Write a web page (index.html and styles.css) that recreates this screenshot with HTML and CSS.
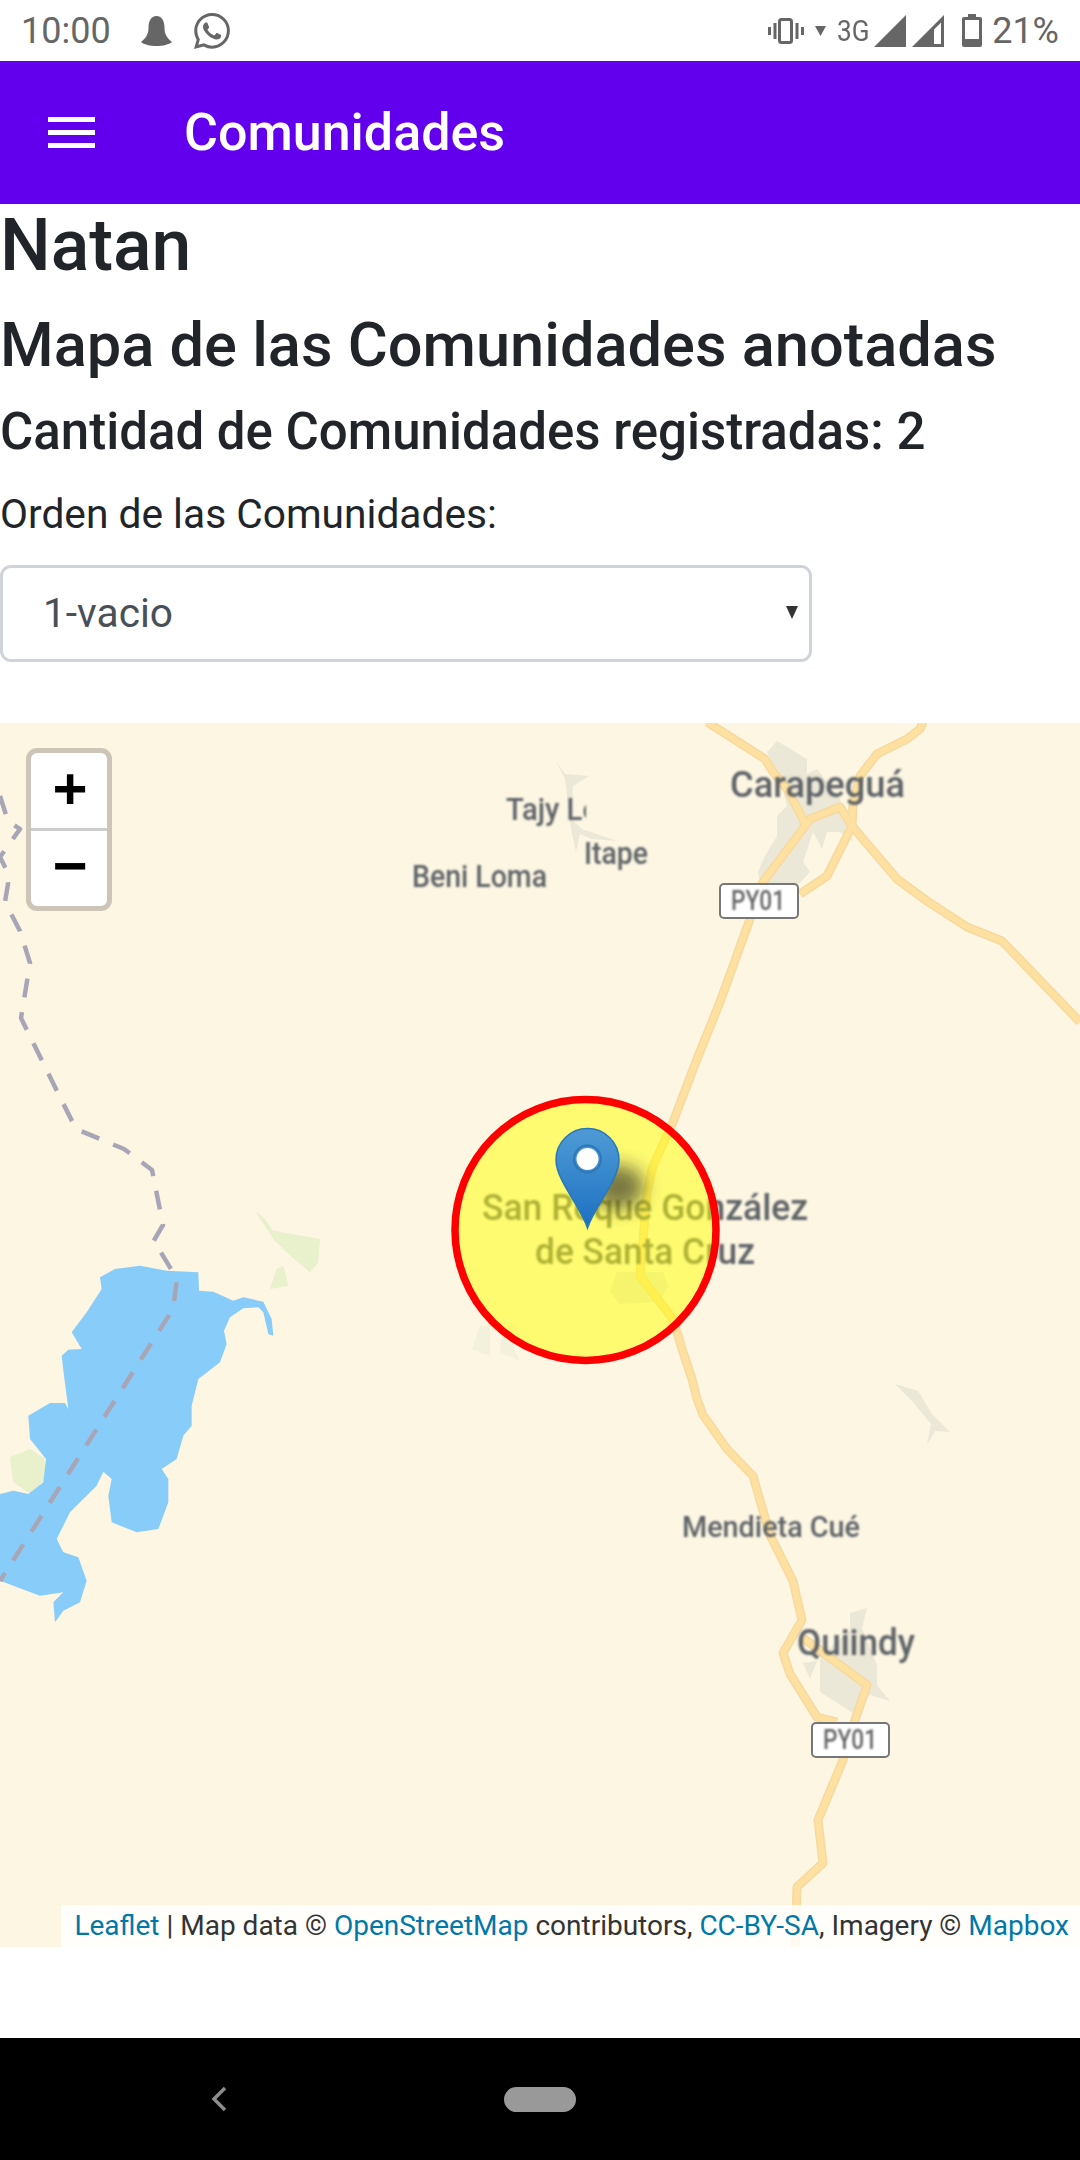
FILE: index.html
```html
<!DOCTYPE html>
<html lang="es">
<head>
  <meta charset="UTF-8">
  <title>Comunidades</title>
  <link rel="stylesheet" href="styles.css">
</head>
<body>

  <div class="statusbar">
    <span class="clock">10:00</span>
    <svg class="ic-bell" viewBox="0 0 31 30"><path d="M15.5 0C10 0 7.500 5 7.500 12c0 6-2.500 10-7.500 14 3 2.500 9 4 15.500 4s12.500-1.500 15.500-4c-5-4-7.500-8-7.500-14C23.500 5 21 0 15.500 0z"/></svg>
    <svg class="ic-whatsapp" viewBox="0 0 24 24"><path d="M17.472 14.382c-.297-.149-1.758-.867-2.03-.967-.273-.099-.471-.148-.67.15-.197.297-.767.966-.94 1.164-.173.199-.347.223-.644.075-.297-.15-1.255-.463-2.39-1.475-.883-.788-1.48-1.761-1.653-2.059-.173-.297-.018-.458.13-.606.134-.133.298-.347.446-.52.149-.174.198-.298.298-.497.099-.198.05-.371-.025-.52-.075-.149-.669-1.612-.916-2.207-.242-.579-.487-.5-.669-.51-.173-.008-.371-.01-.57-.01-.198 0-.52.074-.792.372-.272.297-1.04 1.016-1.04 2.479 0 1.462 1.065 2.875 1.213 3.074.149.198 2.096 3.2 5.077 4.487.709.306 1.262.489 1.694.625.712.227 1.36.195 1.871.118.571-.085 1.758-.719 2.006-1.413.248-.694.248-1.289.173-1.413-.074-.124-.272-.198-.57-.347m-5.421 7.403h-.004a9.87 9.87 0 01-5.031-1.378l-.361-.214-3.741.982.998-3.648-.235-.374a9.86 9.86 0 01-1.51-5.26c.001-5.45 4.436-9.884 9.888-9.884 2.64 0 5.122 1.03 6.988 2.898a9.825 9.825 0 012.893 6.994c-.003 5.45-4.437 9.884-9.885 9.884m8.413-18.297A11.815 11.815 0 0012.05 0C5.495 0 .16 5.335.157 11.892c0 2.096.547 4.142 1.588 5.945L.057 24l6.305-1.654a11.882 11.882 0 005.683 1.448h.005c6.554 0 11.89-5.335 11.893-11.893a11.821 11.821 0 00-3.48-8.413z"/></svg>
    <div class="status-right">
      <svg class="ic-vibrate" viewBox="0 0 36 26">
        <rect x="0" y="9" width="3" height="8"/>
        <rect x="5.500" y="5" width="3" height="16"/>
        <rect x="11.500" y="1.500" width="12" height="23" rx="2" class="hollow"/>
        <rect x="27.500" y="5" width="3" height="16"/>
        <rect x="33" y="9" width="3" height="8"/>
      </svg>
      <svg class="ic-arrow" viewBox="0 0 11 10"><path d="M0 0h11L5.500 10z"/></svg>
      <span class="net">3G</span>
      <svg class="ic-signal" viewBox="0 0 32 32"><path d="M0 32L32 0v32z"/></svg>
      <svg class="ic-signal" viewBox="0 0 32 32"><path d="M0 32L32 0v32zM22 14.500v14.500h7V7.500z" fill-rule="evenodd"/></svg>
      <svg class="ic-battery" viewBox="0 0 20 33"><path d="M6 0h8v3h4a2 2 0 012 2v26a2 2 0 01-2 2H2a2 2 0 01-2-2V5a2 2 0 012-2h4zM3 6v19h14V6z" fill-rule="evenodd"/></svg>
      <span class="pct">21%</span>
    </div>
  </div>

  <header class="appbar">
    <div class="burger"><i></i><i></i><i></i></div>
    <div class="appbar-title">Comunidades</div>
  </header>

  <main class="content">
    <h1>Natan</h1>
    <h2>Mapa de las Comunidades anotadas</h2>
    <h3>Cantidad de Comunidades registradas: 2</h3>
    <label for="orden">Orden de las Comunidades:</label>
    <div class="select-wrap">
      <select id="orden">
        <option>1-vacio</option>
        <option>2-vacio</option>
      </select>
    </div>

    <div class="map">
      <svg class="map-canvas" viewBox="0 724 1080 1224">
        <defs>
          <filter id="soft"><feGaussianBlur stdDeviation="0.9"/></filter>
          <filter id="blur-shadow" x="-50%" y="-50%" width="200%" height="200%"><feGaussianBlur stdDeviation="9"/></filter>
          <clipPath id="tile-left"><rect x="0" y="724" width="586" height="300"/></clipPath>
          <linearGradient id="pin" x1="0" y1="0" x2="0" y2="1">
            <stop offset="0" stop-color="#4f9bd6"/>
            <stop offset="1" stop-color="#1c70c2"/>
          </linearGradient>
          <g id="roads">
            <path d="M707 723L765 760L773 773L787 790L803 820L805 827L763 883L750 920L720 1003L697 1060L673 1123L653 1167L647 1193L640 1277L673 1320L683 1353L692 1380L697 1400L703 1416L727 1450L753 1477L770 1536L793 1582L802 1621L783 1654L790 1675L817 1718L837 1723"/>
            <path d="M923 723L920 730L907 740L877 755L860 777L853 807L852 827L827 877L800 895"/>
            <path d="M805 827L810 820L840 808L852 827L897 880L927 902L967 928L1002 942L1080 1023"/>
            <path d="M803 1639L833 1661L867 1686L855 1721L843 1761L818 1821L823 1864L797 1888L795 1950"/>
          </g>
        </defs>

        <g transform="translate(0 1220) scale(.33333)">
          <polygon class="green" points="765,-24 790,-5 820,35 960,60 955,130 930,160 860,100 820,60"/>
          <polygon class="green" points="850,140 865,200 810,210 830,150"/>
          <polygon class="green" points="30,715 90,690 135,720 135,780 90,825 40,790"/>
          <polygon class="water" points="300,175 345,150 420,140 500,155 595,160 597,215 640,218 700,245 730,235 790,248 815,300 820,350 805,345 790,280 775,265 730,268 690,295 672,335 680,375 660,430 595,480 575,560 575,620 550,650 530,720 485,750 505,780 505,850 475,930 410,940 335,910 325,830 335,780 310,758 290,800 210,880 170,960 190,1000 235,1015 260,1085 240,1150 190,1175 165,1210 160,1150 190,1120 120,1130 0,1085 0,825 40,815 85,825 130,790 138,720 90,660 85,590 150,552 195,552 205,570 192,470 185,410 205,392 245,390 215,340 260,280 305,210"/>
        </g>
        <path class="border" d="M0 797L8 822L20 830L0 858L7 872L8 885L5 903L20 932L30 964L21 1019L55 1088L76 1130L124 1150L152 1171L163 1226L153 1243L160 1252L177 1280L173 1310L0 1582"/>

        <polygon class="town" points="777,742 807,760 807,775 817,770 840,800 853,843 840,833 827,833 822,850 813,833 803,863 810,873 797,887 760,883 758,873 765,857 777,837 777,817 787,807 780,780 767,753"/>
        <polygon class="town" points="850,1614 867,1609 862,1629 877,1666 877,1686 890,1702 870,1696 853,1714 820,1693 820,1661 833,1646 850,1632"/>
        <polygon class="town" points="803,1664 817,1662 810,1680"/>
        <polygon class="town" points="617,1273 663,1273 668,1287 660,1303 620,1305 610,1293"/>
        <polygon class="town" points="556,762 565,775 589,777 573,787 571,820 582,830 617,842 591,840 580,835 576,853 571,830 565,780"/>
        <polygon class="town" points="895,1385 918,1392 932,1415 950,1433 935,1432 927,1446 931,1425 912,1402"/>
        <polygon class="town faint" points="472,1350 480,1327 490,1327 490,1357"/>
        <polygon class="town faint" points="503,1327 518,1325 510,1340 520,1362 500,1353"/>

        <use href="#roads" class="road-case"/>
        <use href="#roads" class="road-fill"/>

        <g class="labels" filter="url(#soft)">
          <text x="730" y="798" font-size="37" textLength="175" lengthAdjust="spacingAndGlyphs">Carapeguá</text>
          <text x="506" y="821" font-size="31" textLength="93" lengthAdjust="spacingAndGlyphs" clip-path="url(#tile-left)">Tajy Lo</text>
          <text x="584" y="865" font-size="31" textLength="64" lengthAdjust="spacingAndGlyphs">Itape</text>
          <text x="412" y="888" font-size="31" textLength="135" lengthAdjust="spacingAndGlyphs">Beni Loma</text>
          <text x="482" y="1221" font-size="36" textLength="326" lengthAdjust="spacingAndGlyphs">San Roque González</text>
          <text x="535" y="1265" font-size="36" textLength="220" lengthAdjust="spacingAndGlyphs">de Santa Cruz</text>
          <text x="682" y="1538" font-size="29" textLength="178" lengthAdjust="spacingAndGlyphs">Mendieta Cué</text>
          <text x="797" y="1656" font-size="37" textLength="118" lengthAdjust="spacingAndGlyphs">Quiindy</text>
        </g>

        <g class="shield">
          <rect x="720" y="885" width="78" height="34" rx="4"/>
          <text x="731" y="911" font-size="27" textLength="54" lengthAdjust="spacingAndGlyphs" filter="url(#soft)">PY01</text>
          <rect x="812" y="1724" width="77" height="34" rx="4"/>
          <text x="823" y="1750" font-size="27" textLength="54" lengthAdjust="spacingAndGlyphs" filter="url(#soft)">PY01</text>
        </g>

        <circle class="radius" cx="585.500" cy="1231" r="130.500"/>
        <ellipse class="pin-shadow" cx="618" cy="1188" rx="26" ry="22"/>
        <path class="pin-body" d="M587.500 1229C581 1208 556 1181 556 1161a31.500 31.500 0 0163 0c0 20-25 47-31.500 68z"/>
        <circle class="pin-ring" cx="587.500" cy="1160" r="13.500"/>
        <circle class="pin-hole" cx="587.500" cy="1160" r="11"/>
      </svg>

      <div class="zoom-ctl">
        <a class="zoom-btn">+</a>
        <a class="zoom-btn">−</a>
      </div>
      <div class="attribution"><a>Leaflet</a> | Map data © <a>OpenStreetMap</a> contributors, <a>CC-BY-SA</a>, Imagery © <a>Mapbox</a></div>
    </div>
  </main>

  <div class="navbar">
    <svg class="nav-back" viewBox="0 0 16 26"><path d="M14 2L3 13l11 11"/></svg>
    <div class="nav-pill"></div>
  </div>

</body>
</html>
```

FILE: styles.css
```css
html, body {
  margin: 0;
  padding: 0;
}

body {
  width: 1080px;
  height: 2160px;
  display: flex;
  flex-direction: column;
  font-family: Roboto, sans-serif;
  color: #212529;
  background: #fff;
  overflow: hidden;
}

/* status bar */
.statusbar {
  height: 61px;
  display: flex;
  align-items: center;
  padding: 0 21px;
  color: #666;
  fill: #666;
  font-size: 36px;
}

.clock {
  width: 120px;
}

.ic-bell {
  width: 31px;
  height: 30px;
}

.ic-whatsapp {
  width: 36px;
  height: 36px;
  margin-left: 22px;
}

.status-right {
  margin-left: auto;
  display: flex;
  align-items: center;
}

.ic-vibrate {
  width: 36px;
  height: 26px;
}

.hollow {
  fill: none;
  stroke: #666;
  stroke-width: 3;
}

.ic-arrow {
  width: 11px;
  height: 10px;
  margin-left: 11px;
}

.net {
  font-size: 29px;
  margin-left: 11px;
  transform: scaleX(.9);
  transform-origin: left;
  width: 31px;
}

.ic-signal {
  width: 32px;
  height: 32px;
  margin-left: 6px;
}

.ic-battery {
  width: 20px;
  height: 33px;
  margin-left: 18px;
}

.pct {
  margin-left: 10px;
}

/* app bar */
.appbar {
  height: 143px;
  background: #6200ee;
  display: flex;
  align-items: center;
  color: #fff;
}

.burger {
  width: 47px;
  margin-left: 48px;
  display: flex;
  flex-direction: column;
  gap: 8px;
}

.burger i {
  display: block;
  height: 5px;
  background: #fff;
}

.appbar-title {
  margin-left: 89px;
  font-size: 52px;
  font-weight: 500;
}

/* page content */
.content {
  flex: 1;
}

h1, h2, h3 {
  margin: 0;
  font-weight: 500;
  line-height: 1.2;
}

h1 {
  font-size: 71.500px;
  margin-top: -1px;
  margin-bottom: 20px;
}

h2 {
  font-size: 61.350px;
  margin-bottom: 19px;
}

h3 {
  font-size: 51px;
  margin-bottom: 21px;
}

label {
  display: block;
  font-size: 40.700px;
  line-height: 1.5;
  margin-bottom: 20px;
}

.select-wrap {
  position: relative;
  width: 812px;
}

.select-wrap::after {
  content: "";
  position: absolute;
  right: 14px;
  top: 41px;
  border-top: 13px solid #333;
  border-left: 6px solid transparent;
  border-right: 6px solid transparent;
}

select {
  display: block;
  width: 100%;
  height: 97px;
  padding: 0 40px;
  appearance: none;
  -webkit-appearance: none;
  background: #fff;
  border: 3px solid #ced4da;
  border-radius: 11px;
  font-family: Roboto, sans-serif;
  font-size: 40.700px;
  color: #495057;
}

/* map */
.map {
  position: relative;
  height: 1224px;
  margin-top: 61px;
  background: #fcf6e3;
  overflow: hidden;
}

.map-canvas {
  display: block;
  width: 1080px;
  height: 1224px;
}

.water {
  fill: #88ccfa;
}

.green {
  fill: #e8f0cc;
}

.town {
  fill: #ece8d8;
}

.faint {
  fill: #f3f1dc;
}

.border {
  fill: none;
  stroke: #a8a6b6;
  stroke-width: 4.500;
  stroke-dasharray: 19 15;
  stroke-linejoin: round;
}

.road-case,
.road-fill {
  fill: none;
  stroke-linejoin: round;
}

.road-case {
  stroke: #f7d99f;
  stroke-width: 9;
}

.road-fill {
  stroke: #fee1a0;
  stroke-width: 6;
}

.labels {
  fill: #5f6368;
  font-family: Roboto, sans-serif;
  font-weight: 500;
}

.shield rect {
  fill: #fff;
  stroke: #777;
  stroke-width: 2;
}

.shield text {
  fill: #666;
  font-family: Roboto, sans-serif;
  font-weight: 500;
}

.pin-shadow {
  fill: #222;
  opacity: .6;
  filter: url(#blur-shadow);
}

.radius {
  fill: #ff0;
  fill-opacity: .5;
  stroke: #f00;
  stroke-width: 7.500;
}

.pin-body {
  fill: url(#pin);
  stroke: #2a78b8;
  stroke-width: 1.500;
}

.pin-ring {
  fill: none;
  stroke: #2f78b5;
  stroke-width: 2;
}

.pin-hole {
  fill: #fff;
}

.zoom-ctl {
  position: absolute;
  left: 26px;
  top: 25px;
  width: 76px;
  border: 5px solid #ccc5b8;
  border-radius: 11px;
  background: #fff;
  overflow: hidden;
}

.zoom-btn {
  display: block;
  height: 75px;
  line-height: 68px;
  padding-left: 2px;
  text-align: center;
  font-family: "DejaVu Sans Mono", monospace;
  font-weight: bold;
  font-size: 56px;
  color: #000;
}

.zoom-btn + .zoom-btn {
  border-top: 3px solid #ccc;
}

.attribution {
  position: absolute;
  right: 0;
  bottom: 0;
  height: 42px;
  line-height: 42px;
  padding: 0 11px 0 13px;
  background: rgba(255, 255, 255, .85);
  font-size: 28px;
  color: #333;
}

.attribution a {
  color: #0078a8;
}

/* nav bar */
.navbar {
  height: 122px;
  background: #000;
  display: flex;
  align-items: center;
}

.nav-back {
  width: 16px;
  height: 26px;
  margin-left: 211px;
  fill: none;
  stroke: #8c8c8c;
  stroke-width: 3.500;
}

.nav-pill {
  width: 72px;
  height: 25px;
  margin-left: 277px;
  border-radius: 13px;
  background: #999;
}
```
